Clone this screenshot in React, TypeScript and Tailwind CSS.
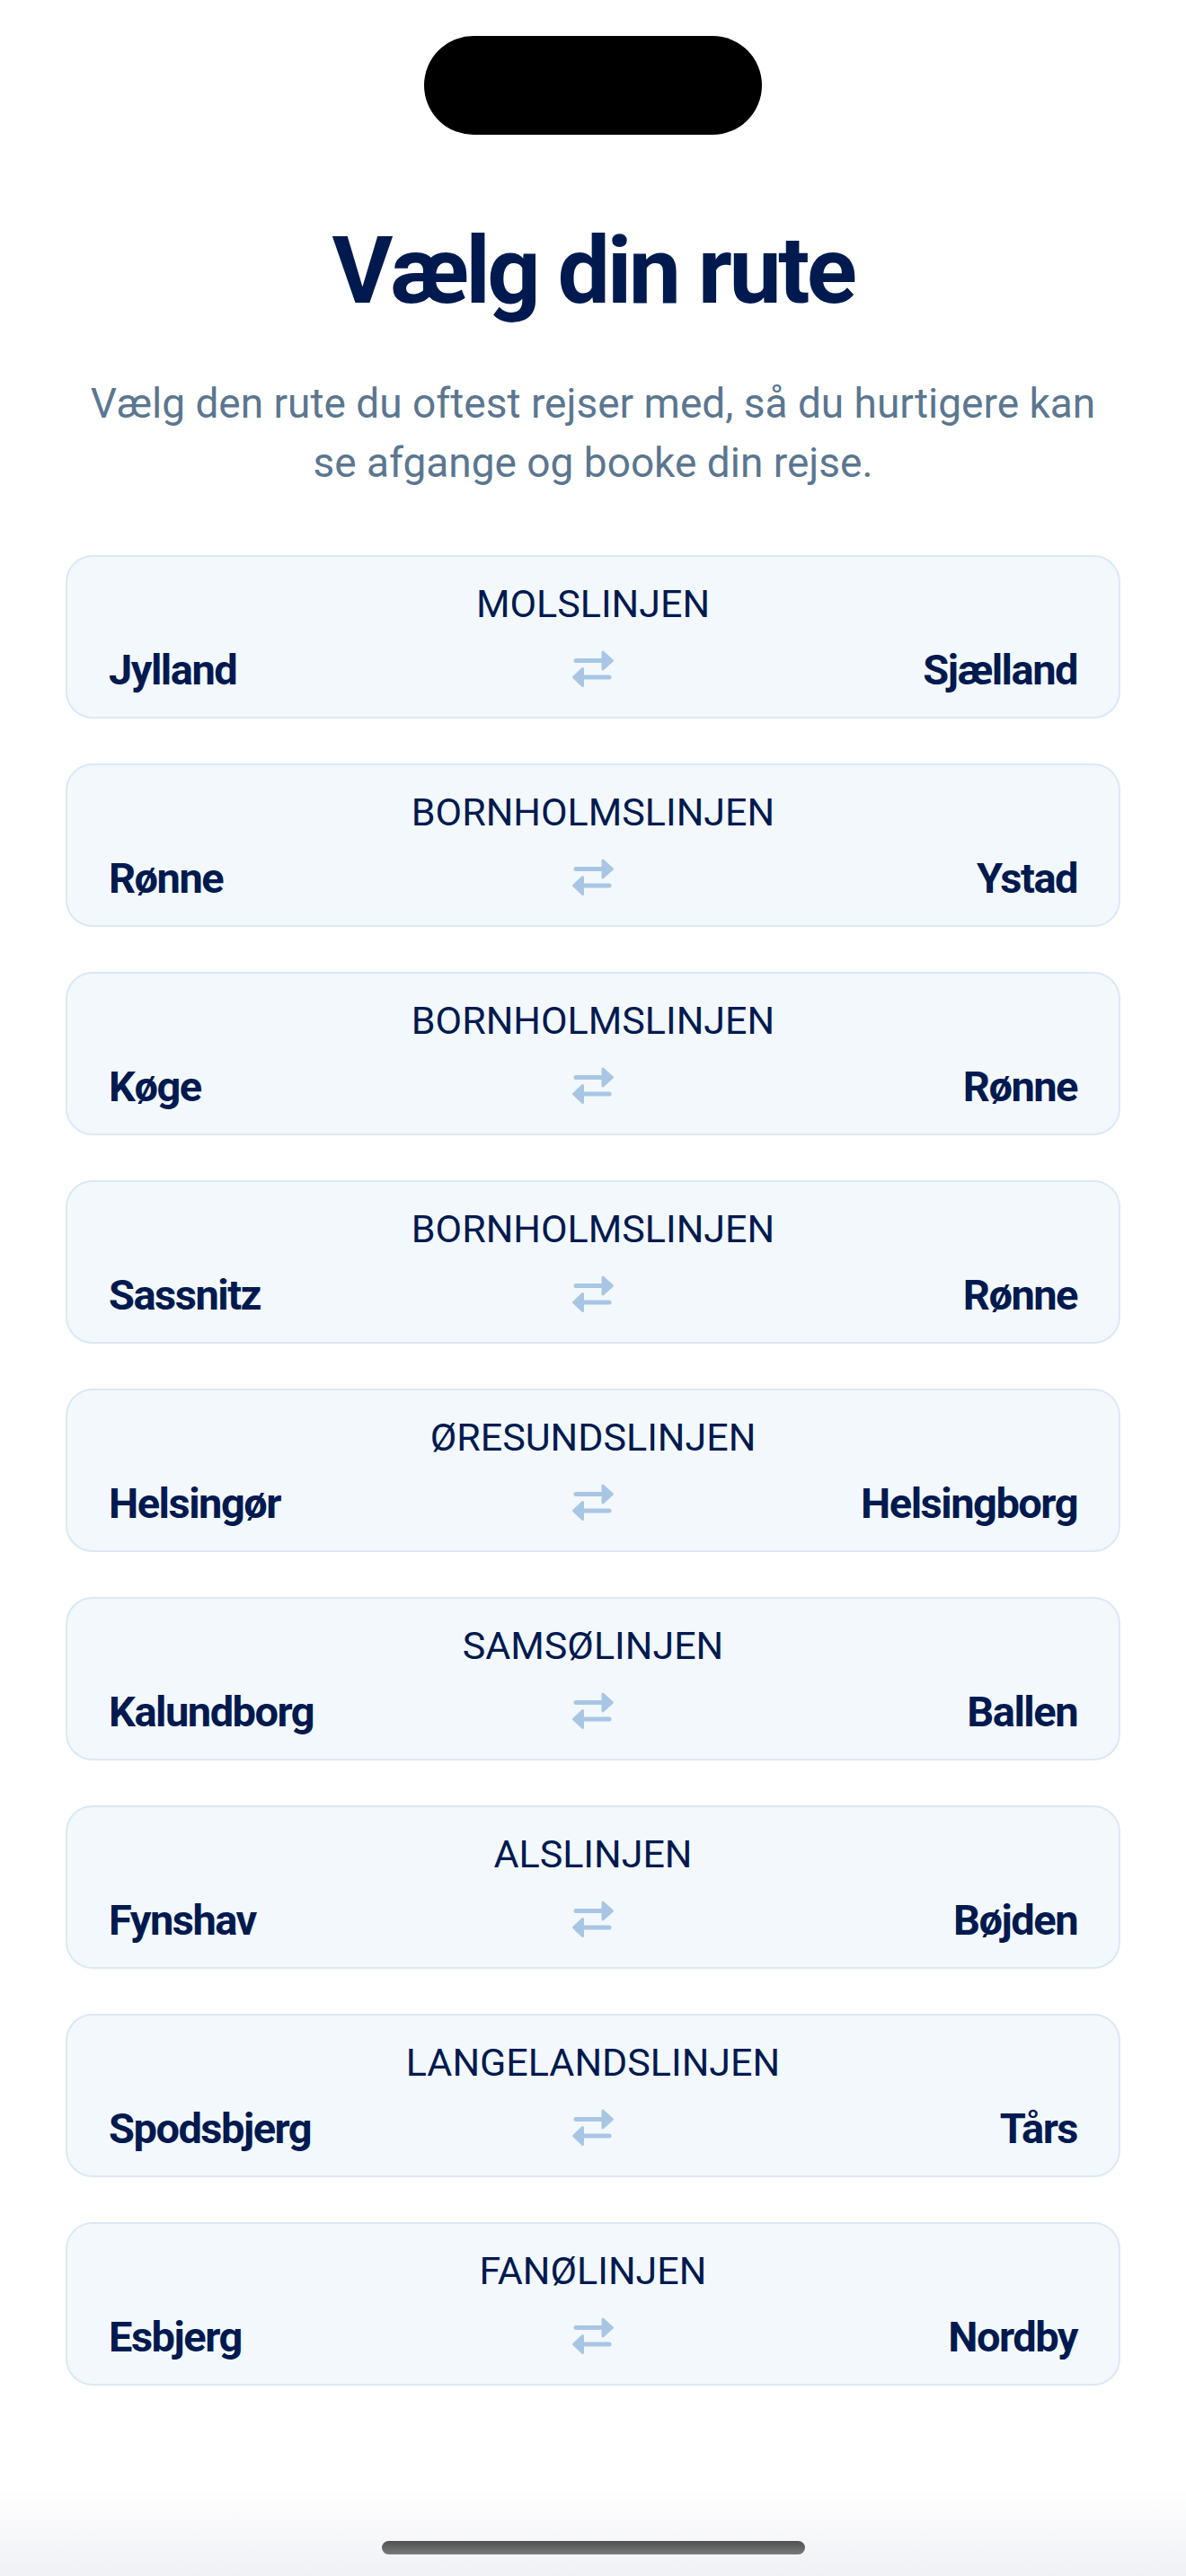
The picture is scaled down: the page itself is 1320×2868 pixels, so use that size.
import React from 'react';

type Route = {
  line: string;
  from: string;
  to: string;
};

const routes: Route[] = [
  { line: 'MOLSLINJEN', from: 'Jylland', to: 'Sjælland' },
  { line: 'BORNHOLMSLINJEN', from: 'Rønne', to: 'Ystad' },
  { line: 'BORNHOLMSLINJEN', from: 'Køge', to: 'Rønne' },
  { line: 'BORNHOLMSLINJEN', from: 'Sassnitz', to: 'Rønne' },
  { line: 'ØRESUNDSLINJEN', from: 'Helsingør', to: 'Helsingborg' },
  { line: 'SAMSØLINJEN', from: 'Kalundborg', to: 'Ballen' },
  { line: 'ALSLINJEN', from: 'Fynshav', to: 'Bøjden' },
  { line: 'LANGELANDSLINJEN', from: 'Spodsbjerg', to: 'Tårs' },
  { line: 'FANØLINJEN', from: 'Esbjerg', to: 'Nordby' },
];

// two-way arrows with filled, rounded heads
const SwapIcon = () => (
  <svg width="48" height="44" viewBox="0 0 48 44" fill="none">
    <g stroke="#a8c6e4" strokeLinecap="round" strokeLinejoin="round">
      <path d="M5 11.5H36" strokeWidth="5" />
      <path d="M35 2 L45.5 11.5 L35 21 Z" fill="#a8c6e4" strokeWidth="3" />
      <path d="M12 30H42" strokeWidth="5" />
      <path d="M12.5 20.5 L2.5 30 L12.5 39.5 Z" fill="#a8c6e4" strokeWidth="3" />
    </g>
  </svg>
);

const RouteCard = ({ route }: { route: Route }) => (
  <button className="w-full rounded-[30px] border-2 border-[#dbe8f6] bg-[#f3f8fd] px-[46px] pt-[26px] pb-[24px] text-[#001a4f] text-left">
    <div className="text-center text-[43px] leading-[52px] font-normal">{route.line}</div>
    <div className="mt-[20px] grid grid-cols-[1fr_auto_1fr] items-center">
      <span className="justify-self-start text-[47px] leading-[56px] font-bold tracking-[-1.5px]">{route.from}</span>
      <SwapIcon />
      <span className="justify-self-end text-[47px] leading-[56px] font-bold tracking-[-1.5px]">{route.to}</span>
    </div>
  </button>
);

export default function App() {
  return (
    <div className="min-h-screen bg-white flex flex-col font-['Roboto',sans-serif]">
      <div className="flex justify-center pt-[40px]">
        <div className="w-[376px] h-[110px] rounded-full bg-black" />
      </div>

      <h1 className="mt-[100px] text-center text-[104px] leading-[104px] font-bold tracking-[-3.5px] text-[#001a4f]">
        Vælg din rute
      </h1>
      <p className="mt-[62px] px-[96px] text-center text-[46px] leading-[66px] text-[#5b7690]">
        Vælg den rute du oftest rejser med, så du hurtigere kan se afgange og booke din rejse.
      </p>

      <div className="mt-[70px] px-[73px] flex flex-col gap-[50px]">
        {routes.map((r, i) => (
          <RouteCard key={i} route={r} />
        ))}
      </div>

      <div className="mt-auto h-[98px] bg-gradient-to-b from-white to-[#f0f1f5] flex justify-center pt-[59px]">
        <div className="w-[471px] h-[15px] rounded-full bg-gradient-to-b from-[#505050] to-[#7a7a7a]" />
      </div>
    </div>
  );
}
